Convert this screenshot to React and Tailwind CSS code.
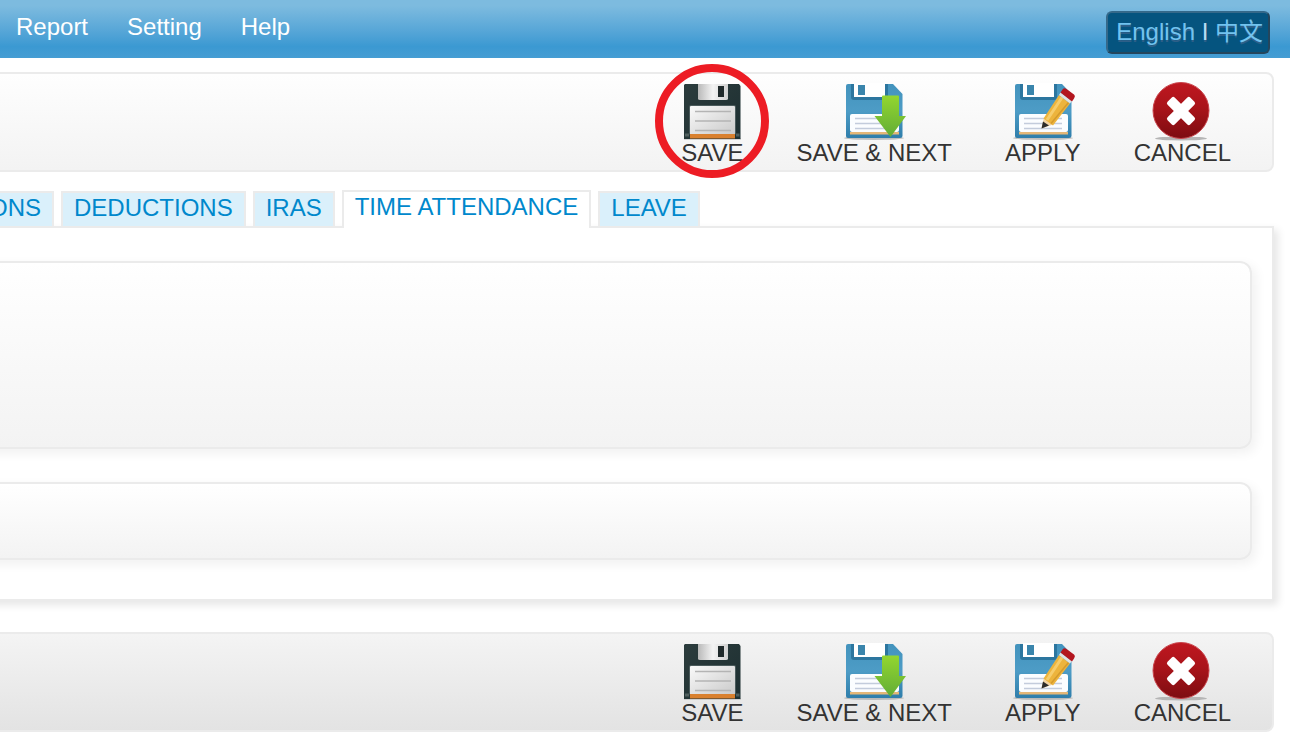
import React from 'react'
import clsx from 'clsx'

const menu = ['Report', 'Setting', 'Help']

const tabs = [
  { id: 'ons', label: 'ONS' },
  { id: 'deductions', label: 'DEDUCTIONS' },
  { id: 'iras', label: 'IRAS' },
  { id: 'attendance', label: 'TIME ATTENDANCE', active: true },
  { id: 'leave', label: 'LEAVE' },
]

const SaveIcon = () => (
  <svg width="62" height="59" viewBox="0 0 62 59" aria-hidden="true">
    <defs>
      <linearGradient id="darkBody" x1="0" y1="0" x2="1" y2="1">
        <stop offset="0" stopColor="#2c3c3d" />
        <stop offset="1" stopColor="#1d2f31" />
      </linearGradient>
      <linearGradient id="shutter" x1="0" y1="0" x2="1" y2="0">
        <stop offset="0" stopColor="#b9b9b9" />
        <stop offset="0.5" stopColor="#f4f4f4" />
        <stop offset="1" stopColor="#d0d0d0" />
      </linearGradient>
      <linearGradient id="paper" x1="0" y1="0" x2="1" y2="1">
        <stop offset="0" stopColor="#fafafa" />
        <stop offset="1" stopColor="#c9c9c9" />
      </linearGradient>
    </defs>
    <rect x="3" y="56" width="57" height="2" fill="#bdbdbd" opacity="0.6" />
    <path d="M4 2H58L59.500 4V57H3V3Z" fill="url(#darkBody)" />
    <path d="M17 2H47V16.500Q47 18 45 18H19Q17 18 17 16.500Z" fill="url(#shutter)" />
    <rect x="37" y="4" width="6" height="11" fill="#202a2b" />
    <rect x="8" y="23" width="47" height="30" rx="2" fill="#4b5b5c" />
    <rect x="9" y="24" width="45" height="29" rx="1" fill="url(#paper)" />
    <path d="M14 29.500H50M14 39H50M14 48.500H50" stroke="#b4b4b4" strokeWidth="1.500" />
    <rect x="9" y="52" width="45" height="4.500" fill="#d9802e" />
    <path d="M4 51.500h4v3H4zM55 51.500h3.500v3H55z" fill="#51605f" />
  </svg>
)

// blue disk shared by the "next" and "apply" icons
const BlueDisk = ({ gradient }) => (
  <>
    <defs>
      <linearGradient id={gradient} x1="0" y1="0" x2="0" y2="1">
        <stop offset="0" stopColor="#4393bd" />
        <stop offset="0.5" stopColor="#4d9cc6" />
        <stop offset="1" stopColor="#2f7eab" />
      </linearGradient>
    </defs>
    <ellipse cx="32" cy="56" rx="30" ry="2" fill="#9b9b9b" opacity="0.6" />
    <path d="M6 2H51L60.500 12V54Q60.500 56 58 56H6Q4 56 4 54V4Q4 2 6 2Z" fill={`url(#${gradient})`} />
    <path d="M9 2H46V15Q46 18 43 18H12Q9 18 9 15Z" fill="#2c769f" />
    <path d="M12 1H43V15H12Z" fill="#fff" />
    <rect x="16" y="3" width="7" height="10" fill="#3a85ac" />
    <rect x="8" y="32" width="49" height="18" rx="2" fill="#fbfdff" />
    <path d="M13 36.500H51M13 41.500H51M13 46.500H51" stroke="#c3ccdc" strokeWidth="1.500" />
    <rect x="8" y="50" width="49" height="2.500" fill="#e5b777" />
  </>
)

const NextIcon = () => (
  <svg width="64" height="59" viewBox="0 0 64 59" aria-hidden="true">
    <BlueDisk gradient="nextBody" />
    <linearGradient id="arrow" x1="0" y1="0" x2="0" y2="1">
      <stop offset="0" stopColor="#93d62f" />
      <stop offset="1" stopColor="#62ad36" />
    </linearGradient>
    <path d="M40 14.500Q40 13.500 41 13.500H56Q57 13.500 57 14.500V34H64L48.500 55L32.500 34H40Z" fill="url(#arrow)" />
  </svg>
)

const ApplyIcon = () => (
  <svg width="64" height="59" viewBox="0 0 64 59" aria-hidden="true">
    <BlueDisk gradient="applyBody" />
    <path d="M30.500 46.500L33 35.500L42 42.500Z" fill="#f1d2a2" />
    <path d="M30.500 46.500L32 39.500L38 43.500Z" fill="#2b2b2b" />
    <path d="M32.500 36.500L48 13L59 21.500L42 43.500Z" fill="#edb43c" />
    <path d="M36 38L51 15.500" stroke="#f6cd6c" strokeWidth="3" />
    <path d="M40 41.500L57.500 20.500" stroke="#d59a2b" strokeWidth="1.500" />
    <path d="M48 13L49.500 10.500L61 19L59 21.500Z" fill="#dfe3e5" />
    <path d="M49.500 10.500L51.500 7.500Q53 5.500 55.500 7L63 12.500Q64.500 14 63 16.500L61 19.500Z" fill="#b3161f" />
  </svg>
)

const CancelIcon = () => (
  <svg width="62" height="59" viewBox="0 0 62 59" aria-hidden="true">
    <defs>
      <linearGradient id="cancelDisc" x1="0" y1="0" x2="0" y2="1">
        <stop offset="0" stopColor="#bf1720" />
        <stop offset="0.45" stopColor="#a9141a" />
        <stop offset="1" stopColor="#7d0c11" />
      </linearGradient>
    </defs>
    <ellipse cx="30" cy="56.500" rx="26" ry="2" fill="#b5b5b5" />
    <circle cx="30" cy="28.500" r="28" fill="url(#cancelDisc)" stroke="#c9454c" strokeWidth="1" />
    <g transform="rotate(45 30 29)" fill="#fff">
      <rect x="14" y="24" width="32" height="10" rx="2" />
      <rect x="25" y="13" width="10" height="32" rx="2" />
    </g>
  </svg>
)

const actions = [
  { label: 'SAVE', Icon: SaveIcon },
  { label: 'SAVE & NEXT', Icon: NextIcon },
  { label: 'APPLY', Icon: ApplyIcon },
  { label: 'CANCEL', Icon: CancelIcon },
]

const Toolbar = ({ className, marked }) => (
  <div
    className={clsx(
      'mr-4 flex justify-end gap-[53px] rounded-r-lg border-2 border-l-0 border-[#ebebeb] bg-linear-to-b pt-2 pr-[41px] pb-[5px]',
      className
    )}
  >
    {actions.map(({ label, Icon }) => (
      <button key={label} type="button" className="relative flex flex-col items-center whitespace-nowrap text-[#333]">
        <Icon />
        <span>{label}</span>
        {marked === label && (
          <span className="pointer-events-none absolute -top-[18px] left-1/2 size-[114px] -translate-x-1/2 rounded-full border-8 border-[#ed1c24]" />
        )}
      </button>
    ))}
  </div>
)

const Card = ({ className }) => (
  <section
    className={clsx(
      'rounded-r-xl border-2 border-l-0 border-[#ebebeb] bg-linear-to-b from-white to-[#f3f3f3] shadow-[4px_4px_12px_rgba(0,0,0,0.06)]',
      className
    )}
  />
)

const App = () => {
  return (
    <div className="overflow-x-hidden bg-white font-['Liberation_Sans','Noto_Sans_CJK_SC',sans-serif] text-2xl leading-6">
      <header className="flex h-[58px] items-start justify-between bg-linear-to-b from-[#7dbbdf] from-10% via-[#3b99d2] via-80% to-[#459dd3] pr-5 pl-4">
        <nav className="flex gap-[39px] pt-[15px] text-white">
          {menu.map(item => (
            <a key={item} href={`#${item.toLowerCase()}`}>{item}</a>
          ))}
        </nav>
        <div className="mt-[11px] rounded-md border-2 border-t-[#35698a] border-r-[#24465d] border-b-[#24465d] border-l-[#35698a] bg-[#05547f] pt-[7px] pr-[5px] pb-2 pl-2 whitespace-nowrap text-[#73c3ef] [text-shadow:0_2px_0_#2d5f88]">
          <a href="#en">English</a>
          <span className="text-[#b5dcf3]"> I </span>
          <a href="#zh" lang="zh">中文</a>
        </div>
      </header>

      <Toolbar className="mt-[14px] from-[#fefefe] to-[#f3f3f3]" marked="SAVE" />

      <nav className="mt-[18px] -ml-6 flex items-end gap-[7px] text-[#0088cc]">
        {tabs.map(tab => (
          <a
            key={tab.id}
            href={`#${tab.id}`}
            className={clsx(
              'border-2 border-b-0 border-[#ebebeb] px-[11px] pt-[3px] whitespace-nowrap',
              tab.active ? 'relative -mb-0.5 bg-white pb-[9px]' : 'bg-[#daf0fb] pb-1.5'
            )}
          >
            {tab.label}
          </a>
        ))}
      </nav>

      <main className="mr-4 -ml-6 flex flex-col gap-[33px] border-2 border-l-0 border-[#ebebeb] pt-[33px] pr-5 pb-[39px] shadow-[4px_4px_8px_rgba(0,0,0,0.1)]">
        <Card className="h-[188px]" />
        <Card className="h-[78px]" />
      </main>

      <Toolbar className="mt-[31px] from-[#f4f4f4] to-[#e3e3e3]" />
    </div>
  )
}

export default App
